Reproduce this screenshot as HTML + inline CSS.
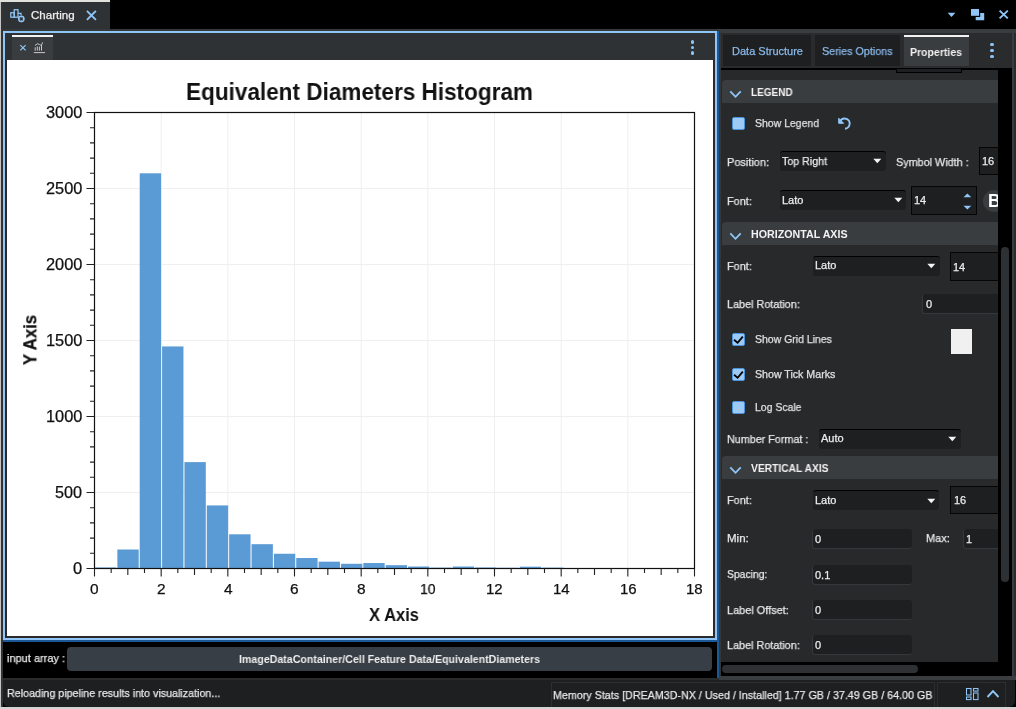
<!DOCTYPE html>
<html><head><meta charset="utf-8">
<style>
*{margin:0;padding:0;box-sizing:border-box}
html,body{width:1016px;height:709px;overflow:hidden;background:#000;font-family:"Liberation Sans", sans-serif;position:relative}
.a{position:absolute}
.t{position:absolute;white-space:nowrap;line-height:1;will-change:transform;-webkit-text-stroke:0.25px currentColor}
</style></head><body>
<div class="a" style="left:0px;top:0px;width:1016px;height:709px;background:#000;"></div>
<div class="a" style="left:0px;top:0px;width:1px;height:709px;background:#c4c4c4;"></div>
<div class="a" style="left:1px;top:0px;width:2px;height:709px;background:#333;"></div>
<div class="a" style="left:0px;top:706.5px;width:1016px;height:2.5px;background:#d4d4d4;"></div>
<div class="a" style="left:0px;top:0px;width:110px;height:2px;background:#e0e0dc;"></div>
<div class="a" style="left:3px;top:2px;width:107px;height:27px;background:#2f3234;"></div>
<div id="t0" class="t" style="left:30.60px;top:9.97px;font-size:11.5px;color:#f0f0f0;transform:scaleX(1.0030);transform-origin:0 0;">Charting</div>
<svg class="a" style="left:0;top:0" width="120" height="30" viewBox="0 0 120 30">
<g fill="none" stroke="#90c6f7" stroke-width="1.25">
<rect x="10.8" y="12.7" width="3.4" height="4.5"/><rect x="14.2" y="9.7" width="3.8" height="7.5"/>
<path d="M18 13.3 H21 V15"/>
<circle cx="21.3" cy="18.9" r="2.6" stroke-width="1.4"/>
<path d="M21.3 15.6 V22.2 M18 18.9 H24.6" stroke-width="0.9"/>
</g>
<circle cx="21.3" cy="18.9" r="1.3" fill="#2f3234"/>
<g stroke="#90c6f7" stroke-width="1.9" stroke-linecap="square"><path d="M87.6 11.6 L95.2 19.2 M95.2 11.6 L87.6 19.2"/></g>
</svg>
<div class="a" style="left:3px;top:29px;width:1013px;height:2px;background:#353839;"></div>
<svg class="a" style="left:930px;top:0" width="86" height="29" viewBox="930 0 86 29">
<path d="M947.6 12.7 H955.4 L951.5 17 Z" fill="#90c6f7"/>
<rect x="971" y="9" width="8" height="6.8" fill="#90c6f7"/>
<path d="M980.2 13 H984.2 V20.3 H975.7 V17 H980.2 Z" fill="#90c6f7"/>
<path d="M999.6 10.6 L1007.8 18.4 M1007.8 10.6 L999.6 18.4" stroke="#90c6f7" stroke-width="1.9"/>
</svg>
<div class="a" style="left:3px;top:31px;width:716px;height:611px;background:#1c5896;"></div>
<div class="a" style="left:3px;top:31px;width:714px;height:609px;background:#90c6f7;"></div>
<div class="a" style="left:5px;top:33px;width:710px;height:605px;background:#2a2a2a;"></div>
<div class="a" style="left:5px;top:33px;width:710px;height:27px;background:#2f3234;"></div>
<div class="a" style="left:7px;top:60px;width:706px;height:576px;background:#fff;"></div>
<div class="a" style="left:12px;top:37px;width:41px;height:23px;background:#3a3d3f;"></div>
<div class="a" style="left:12px;top:35px;width:41px;height:2px;background:#f2f2f2;"></div>
<svg class="a" style="left:0;top:30px" width="60" height="30" viewBox="0 30 60 30">
<path d="M20.3 45.1 L25.6 50.4 M25.6 45.1 L20.3 50.4" stroke="#90c6f7" stroke-width="1.2"/>
<g stroke="#d8d8d8" stroke-width="0.9" fill="none">
<path d="M35 45.5 Q37.5 42.5 39.5 44.5 T42.6 42.4"/>
<path d="M35.2 50.6 V47.3 M37.3 50.6 V46.4 M39.4 50.6 V46.6 M41.5 50.6 V45"/>
<path d="M33.8 52.6 H45"/>
</g>
</svg>
<div class="a" style="left:690.8000000000001px;top:40.0px;width:3.6px;height:3.6px;border-radius:50%;background:#90c6f7"></div>
<div class="a" style="left:690.8000000000001px;top:45.7px;width:3.6px;height:3.6px;border-radius:50%;background:#90c6f7"></div>
<div class="a" style="left:690.8000000000001px;top:51.400000000000006px;width:3.6px;height:3.6px;border-radius:50%;background:#90c6f7"></div>
<svg class="a" style="left:0;top:0" width="1016" height="709" viewBox="0 0 1016 709">
<path d="M161.17 112.5 V568.5 M227.83 112.5 V568.5 M294.50 112.5 V568.5 M361.17 112.5 V568.5 M427.83 112.5 V568.5 M494.50 112.5 V568.5 M561.17 112.5 V568.5 M627.83 112.5 V568.5 M94.5 492.50 H694.5 M94.5 416.50 H694.5 M94.5 340.50 H694.5 M94.5 264.50 H694.5 M94.5 188.50 H694.5" stroke="#efefef" stroke-width="1" fill="none"/>
<rect x="95.00" y="567.44" width="21.36" height="1.06" fill="#5b9bd5"/>
<rect x="117.36" y="549.50" width="21.36" height="19.00" fill="#5b9bd5"/>
<rect x="139.72" y="173.30" width="21.36" height="395.20" fill="#5b9bd5"/>
<rect x="162.08" y="346.43" width="21.36" height="222.07" fill="#5b9bd5"/>
<rect x="184.44" y="462.10" width="21.36" height="106.40" fill="#5b9bd5"/>
<rect x="206.80" y="505.42" width="21.36" height="63.08" fill="#5b9bd5"/>
<rect x="229.16" y="534.30" width="21.36" height="34.20" fill="#5b9bd5"/>
<rect x="251.52" y="544.18" width="21.36" height="24.32" fill="#5b9bd5"/>
<rect x="273.88" y="553.76" width="21.36" height="14.74" fill="#5b9bd5"/>
<rect x="296.24" y="558.01" width="21.36" height="10.49" fill="#5b9bd5"/>
<rect x="318.60" y="561.66" width="21.36" height="6.84" fill="#5b9bd5"/>
<rect x="340.96" y="563.79" width="21.36" height="4.71" fill="#5b9bd5"/>
<rect x="363.32" y="563.03" width="21.36" height="5.47" fill="#5b9bd5"/>
<rect x="385.68" y="565.16" width="21.36" height="3.34" fill="#5b9bd5"/>
<rect x="408.04" y="566.52" width="21.36" height="1.98" fill="#5b9bd5"/>
<rect x="430.40" y="567.59" width="21.36" height="0.91" fill="#5b9bd5"/>
<rect x="452.76" y="566.52" width="21.36" height="1.98" fill="#5b9bd5"/>
<rect x="475.12" y="567.44" width="21.36" height="1.06" fill="#5b9bd5"/>
<rect x="497.48" y="567.74" width="21.36" height="0.76" fill="#5b9bd5"/>
<rect x="519.84" y="566.68" width="21.36" height="1.82" fill="#5b9bd5"/>
<rect x="542.20" y="567.59" width="21.36" height="0.91" fill="#5b9bd5"/>
<rect x="631.64" y="568.04" width="21.36" height="0.46" fill="#5b9bd5"/>
<rect x="94.5" y="112.5" width="600.0" height="456.0" fill="none" stroke="#111" stroke-width="1.2"/>
<path d="M94.50 568.5 V576.5 M111.17 568.5 V573.0 M127.83 568.5 V575.0 M144.50 568.5 V573.0 M161.17 568.5 V576.5 M177.83 568.5 V573.0 M194.50 568.5 V575.0 M211.17 568.5 V573.0 M227.83 568.5 V576.5 M244.50 568.5 V573.0 M261.17 568.5 V575.0 M277.83 568.5 V573.0 M294.50 568.5 V576.5 M311.17 568.5 V573.0 M327.83 568.5 V575.0 M344.50 568.5 V573.0 M361.17 568.5 V576.5 M377.83 568.5 V573.0 M394.50 568.5 V575.0 M411.17 568.5 V573.0 M427.83 568.5 V576.5 M444.50 568.5 V573.0 M461.17 568.5 V575.0 M477.83 568.5 V573.0 M494.50 568.5 V576.5 M511.17 568.5 V573.0 M527.83 568.5 V575.0 M544.50 568.5 V573.0 M561.17 568.5 V576.5 M577.83 568.5 V573.0 M594.50 568.5 V575.0 M611.17 568.5 V573.0 M627.83 568.5 V576.5 M644.50 568.5 V573.0 M661.17 568.5 V575.0 M677.83 568.5 V573.0 M694.50 568.5 V576.5 M94.5 568.50 H86.5 M94.5 553.30 H90.0 M94.5 538.10 H90.0 M94.5 522.90 H90.0 M94.5 507.70 H90.0 M94.5 492.50 H86.5 M94.5 477.30 H90.0 M94.5 462.10 H90.0 M94.5 446.90 H90.0 M94.5 431.70 H90.0 M94.5 416.50 H86.5 M94.5 401.30 H90.0 M94.5 386.10 H90.0 M94.5 370.90 H90.0 M94.5 355.70 H90.0 M94.5 340.50 H86.5 M94.5 325.30 H90.0 M94.5 310.10 H90.0 M94.5 294.90 H90.0 M94.5 279.70 H90.0 M94.5 264.50 H86.5 M94.5 249.30 H90.0 M94.5 234.10 H90.0 M94.5 218.90 H90.0 M94.5 203.70 H90.0 M94.5 188.50 H86.5 M94.5 173.30 H90.0 M94.5 158.10 H90.0 M94.5 142.90 H90.0 M94.5 127.70 H90.0 M94.5 112.50 H86.5" stroke="#222" stroke-width="1.1" fill="none"/>
</svg>
<div id="t1" class="t" style="left:73.20px;top:560.29px;font-size:16.2px;color:#111;transform:scaleX(1.0205);transform-origin:0 0;">0</div>
<div id="t2" class="t" style="left:55.40px;top:484.29px;font-size:16.2px;color:#111;transform:scaleX(0.9994);transform-origin:0 0;">500</div>
<div id="t3" class="t" style="left:46.00px;top:408.29px;font-size:16.2px;color:#111;transform:scaleX(1.0107);transform-origin:0 0;">1000</div>
<div id="t4" class="t" style="left:46.00px;top:332.29px;font-size:16.2px;color:#111;transform:scaleX(1.0107);transform-origin:0 0;">1500</div>
<div id="t5" class="t" style="left:46.00px;top:256.29px;font-size:16.2px;color:#111;transform:scaleX(1.0107);transform-origin:0 0;">2000</div>
<div id="t6" class="t" style="left:46.00px;top:180.29px;font-size:16.2px;color:#111;transform:scaleX(1.0107);transform-origin:0 0;">2500</div>
<div id="t7" class="t" style="left:46.00px;top:104.29px;font-size:16.2px;color:#111;transform:scaleX(1.0107);transform-origin:0 0;">3000</div>
<div id="t8" class="t" style="left:90.20px;top:581.10px;font-size:15px;color:#111;transform:scaleX(1.0307);transform-origin:0 0;">0</div>
<div id="t9" class="t" style="left:156.87px;top:581.10px;font-size:15px;color:#111;transform:scaleX(1.0307);transform-origin:0 0;">2</div>
<div id="t10" class="t" style="left:223.53px;top:581.10px;font-size:15px;color:#111;transform:scaleX(1.0307);transform-origin:0 0;">4</div>
<div id="t11" class="t" style="left:290.20px;top:581.10px;font-size:15px;color:#111;transform:scaleX(1.0307);transform-origin:0 0;">6</div>
<div id="t12" class="t" style="left:356.87px;top:581.10px;font-size:15px;color:#111;transform:scaleX(1.0307);transform-origin:0 0;">8</div>
<div id="t13" class="t" style="left:420.03px;top:581.10px;font-size:15px;color:#111;transform:scaleX(0.9348);transform-origin:0 0;">10</div>
<div id="t14" class="t" style="left:486.40px;top:581.10px;font-size:15px;color:#111;transform:scaleX(0.9708);transform-origin:0 0;">12</div>
<div id="t15" class="t" style="left:553.07px;top:581.10px;font-size:15px;color:#111;transform:scaleX(0.9708);transform-origin:0 0;">14</div>
<div id="t16" class="t" style="left:619.73px;top:581.10px;font-size:15px;color:#111;transform:scaleX(0.9708);transform-origin:0 0;">16</div>
<div id="t17" class="t" style="left:686.40px;top:581.10px;font-size:15px;color:#111;transform:scaleX(0.9708);transform-origin:0 0;">18</div>
<div id="t18" class="t" style="left:186.30px;top:81.26px;font-size:23.2px;color:#111;font-weight:bold;-webkit-text-stroke:0;transform:scaleX(0.9721);transform-origin:0 0;">Equivalent Diameters Histogram</div>
<div id="t19" class="t" style="left:369.00px;top:607.49px;font-size:17.5px;color:#111;font-weight:bold;-webkit-text-stroke:0;transform:scaleX(0.9459);transform-origin:0 0;">X Axis</div>
<div class="t" style="left:31.4px;top:340.1px;font-size:17.5px;font-weight:bold;color:#111;transform:translate(-50%,-50%) rotate(-90deg) scaleX(0.955)">Y Axis</div>
<div class="a" style="left:3px;top:642px;width:716px;height:36px;background:#000;"></div>
<div class="a" style="left:67.4px;top:647px;width:644.6px;height:24px;background:#383e45;border-radius:4px"></div>
<div id="t20" class="t" style="left:6.80px;top:653.37px;font-size:11.5px;color:#e8e8e8;transform:scaleX(0.9566);transform-origin:0 0;">input array :</div>
<div id="t21" class="t" style="left:239.40px;top:653.89px;font-size:11px;color:#ededed;font-weight:bold;-webkit-text-stroke:0;transform:scaleX(0.9655);transform-origin:0 0;">ImageDataContainer/Cell Feature Data/EquivalentDiameters</div>
<div class="a" style="left:717px;top:31px;width:2px;height:647px;background:#1c5896;"></div>
<div class="a" style="left:719px;top:29px;width:297px;height:651px;background:#3a3d3f;"></div>
<div class="a" style="left:719px;top:31px;width:2px;height:649px;background:#353637;"></div>
<div class="a" style="left:721px;top:33px;width:291px;height:35px;background:#2a2b2d;"></div>
<div class="a" style="left:723px;top:35px;width:88px;height:31px;background:#1e1f21;"></div>
<div class="a" style="left:815px;top:35px;width:85px;height:31px;background:#1e1f21;"></div>
<div class="a" style="left:904px;top:37px;width:65px;height:29px;background:#3a3d3f;"></div>
<div class="a" style="left:904px;top:35px;width:65px;height:2px;background:#f2f2f2;"></div>
<div id="t22" class="t" style="left:732.00px;top:45.99px;font-size:11px;color:#8ab9ea;transform:scaleX(1.0011);transform-origin:0 0;">Data Structure</div>
<div id="t23" class="t" style="left:822.00px;top:45.99px;font-size:11px;color:#8ab9ea;transform:scaleX(0.9770);transform-origin:0 0;">Series Options</div>
<div id="t24" class="t" style="left:910.00px;top:46.99px;font-size:11px;color:#f0f0f0;font-weight:bold;-webkit-text-stroke:0;transform:scaleX(0.9555);transform-origin:0 0;">Properties</div>
<div class="a" style="left:990.0px;top:42.6px;width:3.8px;height:3.8px;border-radius:50%;background:#90c6f7"></div>
<div class="a" style="left:990.0px;top:48.6px;width:3.8px;height:3.8px;border-radius:50%;background:#90c6f7"></div>
<div class="a" style="left:990.0px;top:54.5px;width:3.8px;height:3.8px;border-radius:50%;background:#90c6f7"></div>
<div class="a" style="left:721px;top:68px;width:291px;height:2px;background:#000;"></div>
<div class="a" style="left:721px;top:70px;width:277px;height:592px;background:#28292b;"></div>
<div class="a" style="left:896px;top:68px;width:66px;height:5px;background:#1e1f21;border:1px solid #000"></div>
<div class="a" style="left:722px;top:80px;width:276px;height:23px;background:#3a3d3f;border-radius:4px 0 0 0"></div>
<svg class="a" style="left:728px;top:80px" width="16" height="23" viewBox="728 80 16 23"><path d="M730.3 91.3 L735.5 96.8 L740.7 91.3" stroke="#90c6f7" stroke-width="1.8" fill="none"/></svg>
<div id="t25" class="t" style="left:751.40px;top:88.30px;font-size:10.4px;color:#f2f2f2;font-weight:bold;-webkit-text-stroke:0;transform:scaleX(0.9628);transform-origin:0 0;">LEGEND</div>
<div class="a" style="left:722px;top:222px;width:276px;height:23px;background:#3a3d3f;border-radius:4px 0 0 0"></div>
<svg class="a" style="left:728px;top:222px" width="16" height="23" viewBox="728 222 16 23"><path d="M730.3 233.3 L735.5 238.8 L740.7 233.3" stroke="#90c6f7" stroke-width="1.8" fill="none"/></svg>
<div id="t26" class="t" style="left:751.40px;top:230.30px;font-size:10.4px;color:#f2f2f2;font-weight:bold;-webkit-text-stroke:0;transform:scaleX(1.0287);transform-origin:0 0;">HORIZONTAL AXIS</div>
<div class="a" style="left:722px;top:456px;width:276px;height:23px;background:#3a3d3f;border-radius:4px 0 0 0"></div>
<svg class="a" style="left:728px;top:456px" width="16" height="23" viewBox="728 456 16 23"><path d="M730.3 467.3 L735.5 472.8 L740.7 467.3" stroke="#90c6f7" stroke-width="1.8" fill="none"/></svg>
<div id="t27" class="t" style="left:751.40px;top:464.30px;font-size:10.4px;color:#f2f2f2;font-weight:bold;-webkit-text-stroke:0;transform:scaleX(0.9881);transform-origin:0 0;">VERTICAL AXIS</div>
<div class="a" style="left:732px;top:117px;width:13px;height:13px;background:#9ccaf5;border:1px solid #4b93dc;border-radius:2px"></div>
<div id="t28" class="t" style="left:755.00px;top:118.31px;font-size:10.5px;color:#e0e0e0;transform:scaleX(0.9964);transform-origin:0 0;">Show Legend</div>
<svg class="a" style="left:832px;top:112px" width="24" height="22" viewBox="832 112 24 22">
<path d="M838.7 118.2 V123.3 H843.6 Z" fill="#90c6f7" stroke="#90c6f7" stroke-width="1"/>
<path d="M840.2 121.2 A5.1 5.1 0 1 1 845 128.7" stroke="#90c6f7" stroke-width="1.9" fill="none"/>
</svg>
<div id="t29" class="t" style="left:726.80px;top:157.37px;font-size:11.5px;color:#e8e8e8;transform:scaleX(0.9544);transform-origin:0 0;">Position:</div>
<div class="a" style="left:780.3px;top:151.1px;width:105.30000000000007px;height:19.700000000000017px;background:#1e1f21;border-radius:3px;border-top:1px solid #000"></div>
<div id="t30" class="t" style="left:782.00px;top:155.89px;font-size:11px;color:#ececec;transform:scaleX(0.9681);transform-origin:0 0;">Top Right</div>
<svg class="a" style="left:873.2px;top:158.39999999999998px" width="9" height="6" viewBox="0 0 9 6"><path d="M0.3 0.7 H8.3 L4.3 5.2 Z" fill="#f4f4f4"/></svg>
<div id="t31" class="t" style="left:895.50px;top:157.37px;font-size:11.5px;color:#e8e8e8;transform:scaleX(0.9389);transform-origin:0 0;">Symbol Width :</div>
<div class="a" style="left:979px;top:147px;width:24px;height:28.400000000000006px;background:#1e1f21;border:1px solid #050505;"></div>
<div id="t32" class="t" style="left:982.30px;top:156.39px;font-size:11px;color:#ececec;">16</div>
<div id="t33" class="t" style="left:726.80px;top:196.37px;font-size:11.5px;color:#e8e8e8;transform:scaleX(0.9459);transform-origin:0 0;">Font:</div>
<div class="a" style="left:780.3px;top:190.1px;width:126.10000000000002px;height:19.599999999999994px;background:#1e1f21;border-radius:3px;border-top:1px solid #000"></div>
<div id="t34" class="t" style="left:782.00px;top:194.89px;font-size:11px;color:#ececec;">Lato</div>
<svg class="a" style="left:893.8px;top:197.34999999999997px" width="9" height="6" viewBox="0 0 9 6"><path d="M0.3 0.7 H8.3 L4.3 5.2 Z" fill="#f4f4f4"/></svg>
<div class="a" style="left:911px;top:186px;width:66px;height:28.5px;background:#1e1f21;border:1px solid #050505;"></div>
<div id="t35" class="t" style="left:914.30px;top:195.44px;font-size:11px;color:#ececec;">14</div>
<svg class="a" style="left:960px;top:190px" width="14" height="22" viewBox="960 190 14 22">
<path d="M963.5 197.3 H971.3 L967.4 193.6 Z M963.5 205.8 H971.3 L967.4 209.5 Z" fill="#90c6f7"/></svg>
<div class="a" style="left:983px;top:189.5px;width:22px;height:22px;border-radius:50%;background:#3a3d3f"></div>
<div id="t36" class="t" style="left:988.20px;top:192.59px;font-size:17.5px;color:#fff;font-weight:bold;-webkit-text-stroke:0;">B</div>
<div id="t37" class="t" style="left:726.80px;top:261.37px;font-size:11.5px;color:#e8e8e8;transform:scaleX(0.9459);transform-origin:0 0;">Font:</div>
<div class="a" style="left:813.3px;top:255.5px;width:126.5px;height:20.5px;background:#1e1f21;border-radius:3px;border-top:1px solid #000"></div>
<div id="t38" class="t" style="left:815.00px;top:260.29px;font-size:11px;color:#ececec;">Lato</div>
<svg class="a" style="left:927px;top:263.2px" width="9" height="6" viewBox="0 0 9 6"><path d="M0.3 0.7 H8.3 L4.3 5.2 Z" fill="#f4f4f4"/></svg>
<div class="a" style="left:950px;top:252.2px;width:53px;height:28.400000000000034px;background:#1e1f21;border:1px solid #050505;"></div>
<div id="t39" class="t" style="left:953.30px;top:261.59px;font-size:11px;color:#ececec;">14</div>
<div id="t40" class="t" style="left:726.80px;top:298.77px;font-size:11.5px;color:#e8e8e8;transform:scaleX(0.9409);transform-origin:0 0;">Label Rotation:</div>
<div class="a" style="left:922.4px;top:294.2px;width:80.10000000000002px;height:20.3px;background:#1e1f21;border-radius:3px;border-left:1px solid #35383a;border-bottom:1px solid #35383a;"></div>
<div id="t41" class="t" style="left:925.50px;top:299.14px;font-size:11px;color:#ececec;">0</div>
<div class="a" style="left:732px;top:333px;width:13px;height:13px;background:#9ccaf5;border:1px solid #4b93dc;border-radius:2px"></div>
<svg class="a" style="left:730px;top:333px" width="16" height="13" viewBox="730 333 16 13"><path d="M734 339.8 L737.6 342.8 L742.8 336.6" stroke="#000" stroke-width="1.8" fill="none"/></svg>
<div id="t42" class="t" style="left:755.00px;top:334.31px;font-size:10.5px;color:#e0e0e0;transform:scaleX(0.9968);transform-origin:0 0;">Show Grid Lines</div>
<div class="a" style="left:950.8px;top:328.9px;width:21.4px;height:25.1px;background:#f0f0f0;"></div>
<div class="a" style="left:732px;top:368px;width:13px;height:13px;background:#9ccaf5;border:1px solid #4b93dc;border-radius:2px"></div>
<svg class="a" style="left:730px;top:368px" width="16" height="13" viewBox="730 368 16 13"><path d="M734 374.8 L737.6 377.8 L742.8 371.6" stroke="#000" stroke-width="1.8" fill="none"/></svg>
<div id="t43" class="t" style="left:755.00px;top:369.21px;font-size:10.5px;color:#e0e0e0;transform:scaleX(1.0119);transform-origin:0 0;">Show Tick Marks</div>
<div class="a" style="left:732px;top:401px;width:13px;height:13px;background:#9ccaf5;border:1px solid #4b93dc;border-radius:2px"></div>
<div id="t44" class="t" style="left:755.00px;top:402.21px;font-size:10.5px;color:#e0e0e0;transform:scaleX(0.9935);transform-origin:0 0;">Log Scale</div>
<div id="t45" class="t" style="left:726.80px;top:434.17px;font-size:11.5px;color:#e8e8e8;transform:scaleX(0.9365);transform-origin:0 0;">Number Format :</div>
<div class="a" style="left:819.1px;top:428.6px;width:141.60000000000002px;height:20.099999999999966px;background:#1e1f21;border-radius:3px;border-top:1px solid #000"></div>
<div id="t46" class="t" style="left:820.80px;top:433.39px;font-size:11px;color:#ececec;">Auto</div>
<svg class="a" style="left:948.1px;top:436.09999999999997px" width="9" height="6" viewBox="0 0 9 6"><path d="M0.3 0.7 H8.3 L4.3 5.2 Z" fill="#f4f4f4"/></svg>
<div id="t47" class="t" style="left:726.80px;top:495.17px;font-size:11.5px;color:#e8e8e8;transform:scaleX(0.9459);transform-origin:0 0;">Font:</div>
<div class="a" style="left:813.3px;top:490.1px;width:126.20000000000005px;height:20.0px;background:#1e1f21;border-radius:3px;border-top:1px solid #000"></div>
<div id="t48" class="t" style="left:815.00px;top:494.89px;font-size:11px;color:#ececec;">Lato</div>
<svg class="a" style="left:926.9px;top:497.55px" width="9" height="6" viewBox="0 0 9 6"><path d="M0.3 0.7 H8.3 L4.3 5.2 Z" fill="#f4f4f4"/></svg>
<div class="a" style="left:950.2px;top:486.1px;width:52.799999999999955px;height:28.399999999999977px;background:#1e1f21;border:1px solid #050505;"></div>
<div id="t49" class="t" style="left:953.50px;top:495.49px;font-size:11px;color:#ececec;">16</div>
<div id="t50" class="t" style="left:726.80px;top:533.07px;font-size:11.5px;color:#e8e8e8;transform:scaleX(1.0030);transform-origin:0 0;">Min:</div>
<div class="a" style="left:812.3px;top:528.9px;width:100.20000000000005px;height:20.10000000000007px;background:#1e1f21;border-radius:3px;border-left:1px solid #35383a;border-bottom:1px solid #35383a;"></div>
<div id="t51" class="t" style="left:815.40px;top:533.74px;font-size:11px;color:#ececec;">0</div>
<div id="t52" class="t" style="left:925.70px;top:533.07px;font-size:11.5px;color:#e8e8e8;transform:scaleX(0.9550);transform-origin:0 0;">Max:</div>
<div class="a" style="left:962.6px;top:529.1px;width:39.89999999999998px;height:20.400000000000023px;background:#1e1f21;border-radius:3px;border-left:1px solid #35383a;border-bottom:1px solid #35383a;"></div>
<div id="t53" class="t" style="left:965.70px;top:534.09px;font-size:11px;color:#ececec;">1</div>
<div id="t54" class="t" style="left:726.80px;top:569.07px;font-size:11.5px;color:#e8e8e8;transform:scaleX(0.9002);transform-origin:0 0;">Spacing:</div>
<div class="a" style="left:812.3px;top:565px;width:100.20000000000005px;height:20.000000000000046px;background:#1e1f21;border-radius:3px;border-left:1px solid #35383a;border-bottom:1px solid #35383a;"></div>
<div id="t55" class="t" style="left:815.40px;top:569.79px;font-size:11px;color:#ececec;">0.1</div>
<div id="t56" class="t" style="left:726.80px;top:605.17px;font-size:11.5px;color:#e8e8e8;transform:scaleX(0.9508);transform-origin:0 0;">Label Offset:</div>
<div class="a" style="left:812.3px;top:600px;width:100.20000000000005px;height:19.599999999999955px;background:#1e1f21;border-radius:3px;border-left:1px solid #35383a;border-bottom:1px solid #35383a;"></div>
<div id="t57" class="t" style="left:815.40px;top:604.59px;font-size:11px;color:#ececec;">0</div>
<div id="t58" class="t" style="left:726.80px;top:640.17px;font-size:11.5px;color:#e8e8e8;transform:scaleX(0.9409);transform-origin:0 0;">Label Rotation:</div>
<div class="a" style="left:812.3px;top:635px;width:100.20000000000005px;height:20.099999999999955px;background:#1e1f21;border-radius:3px;border-left:1px solid #35383a;border-bottom:1px solid #35383a;"></div>
<div id="t59" class="t" style="left:815.40px;top:639.84px;font-size:11px;color:#ececec;">0</div>
<div class="a" style="left:998px;top:70px;width:14px;height:606px;background:#000;"></div>
<div class="a" style="left:1001px;top:247px;width:8px;height:335px;background:#2e3133;border-radius:4px"></div>
<div class="a" style="left:721px;top:662px;width:277px;height:14px;background:#000;"></div>
<div class="a" style="left:722px;top:665px;width:196px;height:8px;background:#2e3133;border-radius:4px"></div>
<div class="a" style="left:1012px;top:33px;width:2px;height:643px;background:#3a3d3f;"></div>
<div class="a" style="left:1014px;top:33px;width:2px;height:647px;background:#2a2b2c;"></div>
<div class="a" style="left:3px;top:678px;width:716px;height:2px;background:#2a2b2d;"></div>
<div class="a" style="left:719px;top:676px;width:297px;height:4px;background:#3a3d3f;"></div>
<div class="a" style="left:3px;top:680px;width:1012px;height:26.6px;background:#1e1f21;border-radius:0 0 6px 6px"></div>
<div id="t60" class="t" style="left:6.80px;top:688.17px;font-size:11.5px;color:#e8e8e8;transform:scaleX(0.9320);transform-origin:0 0;">Reloading pipeline results into visualization...</div>
<div class="a" style="left:551.1px;top:682.0px;width:384.4px;height:25px;background:#1e1f21;border:1px solid #2d2e30;border-bottom:none"></div>
<div id="t61" class="t" style="left:552.90px;top:690.07px;font-size:11.5px;color:#e8e8e8;transform:scaleX(0.9319);transform-origin:0 0;">Memory Stats [DREAM3D-NX / Used / Installed] 1.77 GB / 37.49 GB / 64.00 GB</div>
<div class="a" style="left:936.9px;top:682.0px;width:69.6px;height:25px;background:#1e1f21;border:1px solid #2d2e30;border-bottom:none"></div>
<svg class="a" style="left:960px;top:684px" width="45" height="20" viewBox="960 684 45 20">
<g fill="none" stroke="#90c6f7" stroke-width="1.05">
<rect x="966.5" y="688.5" width="4.5" height="6.5"/><rect x="966.5" y="697" width="4.5" height="2.6"/>
<rect x="973.5" y="688.5" width="4.5" height="2.6"/><rect x="973.5" y="693" width="4.5" height="6.6"/>
</g>
<path d="M987.5 697 L993 691.2 L998.5 697" stroke="#90c6f7" stroke-width="1.9" fill="none"/>
</svg>
</body></html>
